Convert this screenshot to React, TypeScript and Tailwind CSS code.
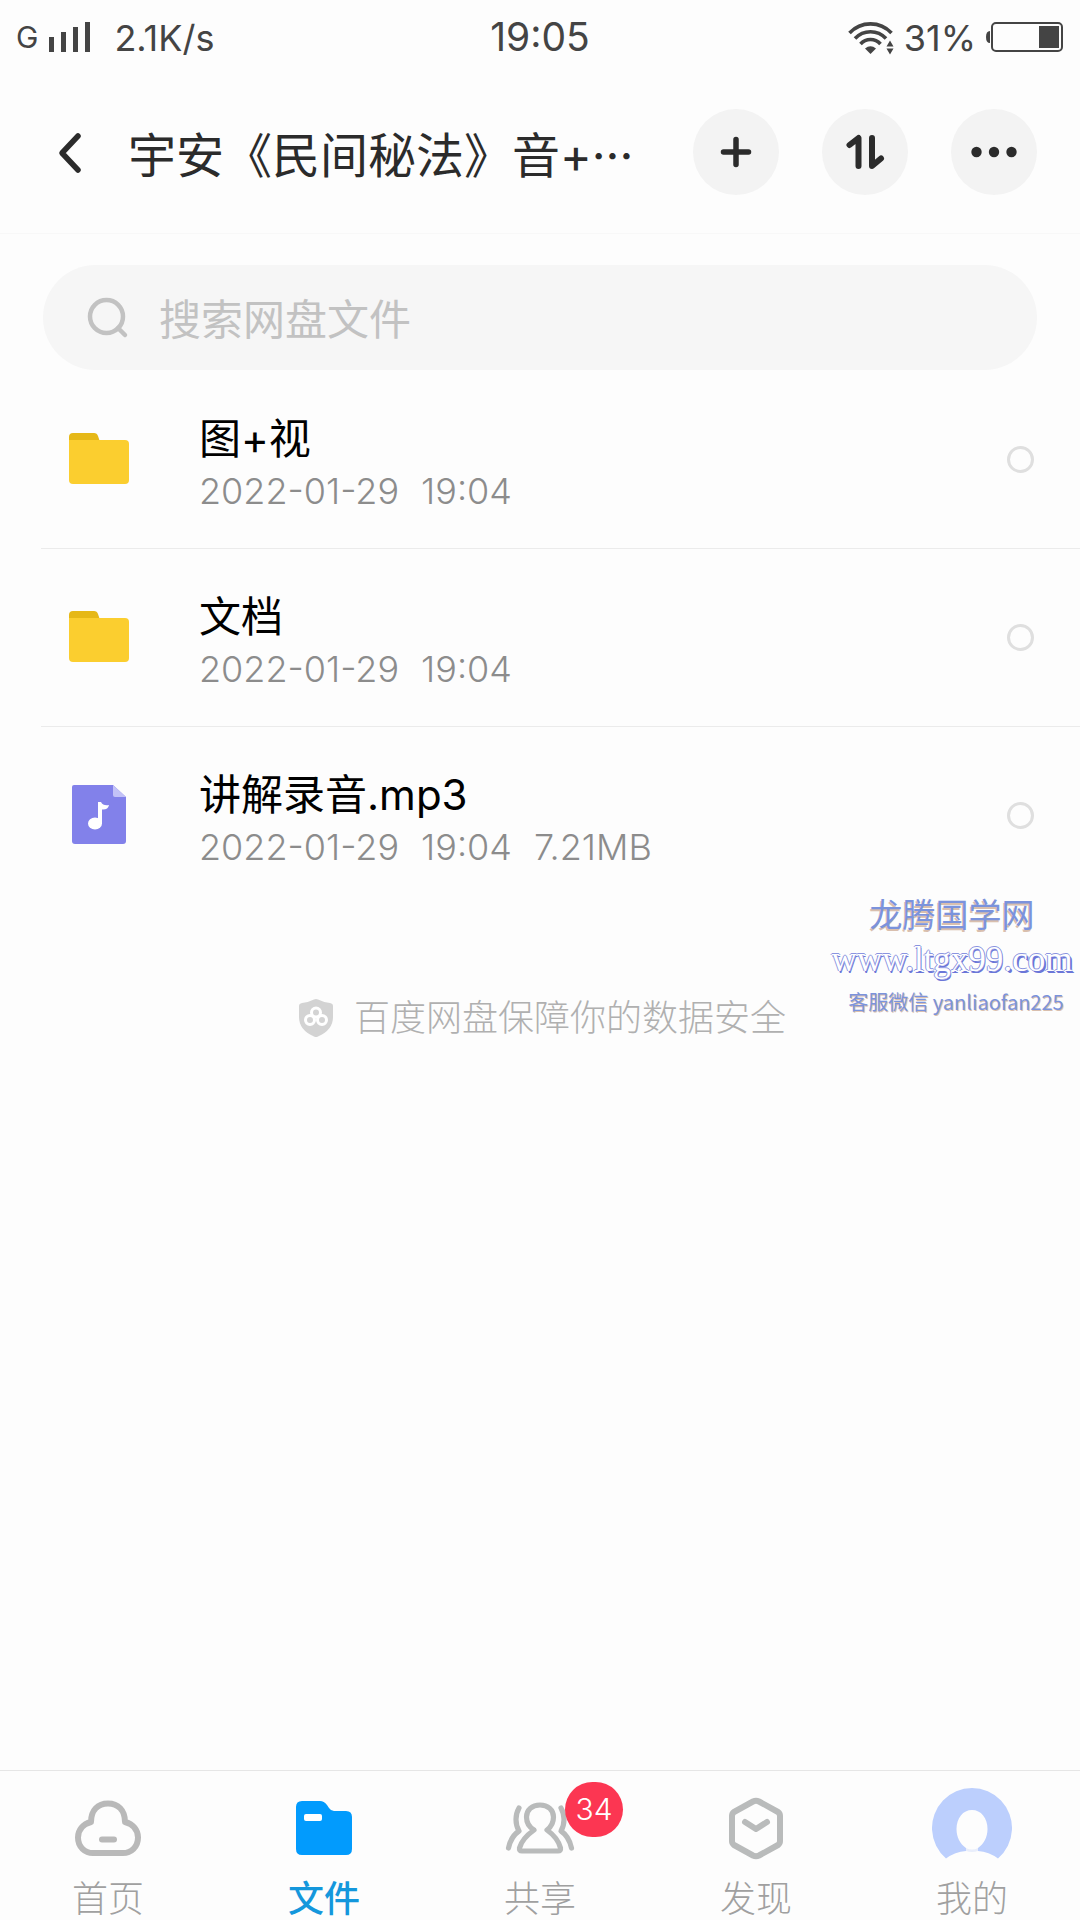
import React, { useState } from "react";

interface FileItem {
  id: number;
  name: string;
  type: "folder" | "audio";
  date: string;
  time: string;
  size?: string;
}

const files: FileItem[] = [
  { id: 1, name: "图+视", type: "folder", date: "2022-01-29", time: "19:04" },
  { id: 2, name: "文档", type: "folder", date: "2022-01-29", time: "19:04" },
  {
    id: 3,
    name: "讲解录音.mp3",
    type: "audio",
    date: "2022-01-29",
    time: "19:04",
    size: "7.21MB",
  },
];

function WifiIcon() {
  return (
    <svg width="46" height="34" viewBox="0 0 46 34" fill="none" stroke="#444" strokeWidth="3.6">
      <path d="M1.500 12C13-.2 32-.2 43.500 12" />
      <path d="M7 17.500C15.500 8.500 29.500 8.500 38 17.500" />
      <path d="M12.500 23C18 17 27 17 32.500 23" />
      <path d="M17 27.500Q22.500 23 28 27.500L22.500 33Z" fill="#444" stroke="none" />
      <path d="M38.500 25.500L42 19.500L45.500 25.500ZM38.500 27.500H45.500L42 33.500Z" fill="#444" stroke="none" />
    </svg>
  );
}

function StatusBar() {
  return (
    <div className="grid h-[75px] grid-cols-3 items-center px-4 text-[#444]">
      <div className="flex items-center">
        <span className="text-[30px]">G</span>
        <svg className="ml-[10px]" width="44" height="34" viewBox="0 0 44 34" fill="#444">
          <path d="M1 16h5v15H1zM13 11h5v20h-5zM25 6h5v25h-5zM37 1h5v30h-5z" />
        </svg>
        <span className="ml-[22px] text-[36px]">2.1K/s</span>
      </div>
      <div className="text-center text-[39px]">19:05</div>
      <div className="flex items-center justify-end">
        <WifiIcon />
        <span className="ml-[10px] text-[36px]">31%</span>
        <svg className="ml-2" width="80" height="34" viewBox="0 0 80 34" fill="none">
          <path d="M6 10Q2 10 2 16t4 6z" fill="#444" />
          <rect x="8" y="2" width="70" height="28" rx="4" stroke="#444" strokeWidth="2" />
          <rect x="55" y="5" width="20" height="22" fill="#444" />
        </svg>
      </div>
    </div>
  );
}

function Header() {
  return (
    <header className="flex h-[159px] items-center border-b border-[#f8f8f8] pr-[43px] pb-1 pl-12">
      <button type="button" aria-label="返回" className="mr-9">
        <svg width="44" height="44" viewBox="0 0 44 44" fill="none" stroke="#2b2b2b" strokeWidth="5.500" strokeLinecap="round" strokeLinejoin="round">
          <path d="M30 6L14 23L30 40" />
        </svg>
      </button>
      <h1 className="min-w-0 flex-1 pt-2 text-[48px] whitespace-nowrap text-[#2b2b2b]">
        宇安《民间秘法》音+···
      </h1>
      <div className="flex shrink-0 gap-[43px]">
        <button type="button" aria-label="添加" className="flex size-[86px] items-center justify-center rounded-full bg-[#f3f3f3]">
          <svg width="44" height="44" viewBox="0 0 44 44" stroke="#2b2b2b" strokeWidth="5.500" strokeLinecap="round">
            <path d="M22 9.500V34.500M9.500 22H34.500" />
          </svg>
        </button>
        <button type="button" aria-label="排序" className="flex size-[86px] items-center justify-center rounded-full bg-[#f3f3f3]">
          <svg width="44" height="44" viewBox="0 0 44 44" fill="none" stroke="#2b2b2b" strokeWidth="6" strokeLinecap="round" strokeLinejoin="round">
            <path d="M6.500 15L15.500 8V36" />
            <path d="M29 8V36L38 28.500" />
          </svg>
        </button>
        <button type="button" aria-label="更多" className="flex size-[86px] items-center justify-center rounded-full bg-[#f3f3f3]">
          <svg width="48" height="44" viewBox="0 0 48 44" fill="#2b2b2b">
            <circle cx="6.500" cy="22" r="5.200" />
            <circle cx="24" cy="22" r="5.200" />
            <circle cx="41.500" cy="22" r="5.200" />
          </svg>
        </button>
      </div>
    </header>
  );
}

function FolderIcon() {
  return (
    <svg width="62" height="62" viewBox="0 0 62 62">
      <path d="M1 13V8Q1 4 5 4H26Q29 4 30 7L32 13Z" fill="#e6b817" />
      <path d="M1 11H57Q61 11 61 15V51Q61 55 57 55H5Q1 55 1 51Z" fill="#fbce2f" />
    </svg>
  );
}

function AudioIcon() {
  return (
    <svg width="62" height="62" viewBox="0 0 62 62">
      <path d="M4 2Q4 0 6 0H45L58 12V56Q58 59 55 59H7Q4 59 4 56Z" fill="#8281ea" />
      <path d="M45 0L58 12H47Q45 12 45 10Z" fill="#c3c2f7" />
      <ellipse cx="27" cy="38.500" rx="7" ry="6" fill="#fff" />
      <path d="M30 17H33Q35 21 41 20Q40 25 34 24.500V39H30Z" fill="#fff" />
    </svg>
  );
}

function FileRow({ file }: { file: FileItem }) {
  return (
    <li className="ml-[41px] border-b border-[#ebebeb] last:border-b-0">
      <label className="flex h-[177px] items-center pr-[46px] pl-[27px]">
        {file.type === "folder" ? <FolderIcon /> : <AudioIcon />}
        <span className="ml-[69px] flex flex-1 flex-col pt-2">
          <span className="text-[42px] leading-[54px] text-black">{file.name}</span>
          <span className="flex gap-[22px] text-[36px] leading-[50px] font-light text-[#8c8c8c]">
            <span>{file.date}</span>
            <span>{file.time}</span>
            {file.size && <span>{file.size}</span>}
          </span>
        </span>
        <input
          type="checkbox"
          className="size-[27px] appearance-none rounded-full border-[3px] border-[#dfdfdf] checked:bg-[#0a9bff]"
        />
      </label>
    </li>
  );
}

function ShieldIcon() {
  return (
    <svg width="36" height="40" viewBox="0 0 36 40">
      <path d="M16 1.500Q18 .5 20 1.500Q26 4.500 32 5Q35 5.500 35 8V19Q35 32 20 38.500Q18 39.500 16 38.500Q1 32 1 19V8Q1 5.500 4 5Q10 4.500 16 1.500Z" fill="#d3d3d3" />
      <g fill="none" stroke="#fff" strokeWidth="3">
        <circle cx="18" cy="14.500" r="4.500" />
        <circle cx="12" cy="22" r="4.500" />
        <circle cx="24" cy="22" r="4.500" />
      </g>
    </svg>
  );
}

function Watermark() {
  return (
    <div className="pointer-events-none absolute top-[892px] right-2 flex w-[240px] flex-col items-center text-[#7b93dc]">
      <div className="text-[33px] leading-[46px] [text-shadow:-1px_2px_0_#d9bfae]">
        龙腾国学网
      </div>
      <div className="font-['Liberation_Serif',serif] text-[35px] leading-[44px] text-white [text-shadow:-1px_0_0_#8a94e0,1px_0_0_#8a94e0,0_-1px_0_#8a94e0,1px_2px_0_#6b76d8]">
        www.ltgx99
        <span className="[text-shadow:-1px_0_0_#8a94e0,0_-1px_0_#8a94e0,1px_1px_0_#6b76d8,2px_2px_0_#6b76d8]">
          .com
        </span>
      </div>
      <div className="pl-2 font-['Noto_Sans_CJK_SC',sans-serif] text-[20px] leading-[40px] whitespace-nowrap [text-shadow:1px_1px_0_#d9bfae]">
        客服微信 yanliaofan225
      </div>
    </div>
  );
}

function CloudIcon() {
  return (
    <svg width="68" height="58" viewBox="0 0 68 58" fill="none" stroke="#b9b9b9" strokeWidth="6" strokeLinejoin="round">
      <path d="M17 23C17 11 24 4.500 34 4.500S51 11 51 23C59 25 64 31 64 38.500C64 48 57 54 49 54H19C11 54 4 48 4 38.500C4 31 9 25 17 23Z" />
      <path d="M28 40.500H40" strokeLinecap="round" />
    </svg>
  );
}

function FilesIcon() {
  return (
    <svg width="58" height="58" viewBox="0 0 58 58">
      <path d="M1 8Q1 2 7 2H25Q29 2 32 6L34 9Q36 12 39 12H51Q57 12 57 18V50Q57 56 51 56H7Q1 56 1 50Z" fill="#029bfd" />
      <rect x="9" y="15" width="18" height="7" rx="2" fill="#fff" />
    </svg>
  );
}

function ShareIcon() {
  return (
    <svg width="70" height="58" viewBox="0 0 70 58" fill="none" stroke="#b9bbbb" strokeWidth="5.200" strokeLinecap="round" strokeLinejoin="round">
      <path d="M29 31C24 28 21.500 23 21.500 18C21.500 11 27 6 35 6S48.500 11 48.500 18C48.500 23 46 28 42 31C49 36 54 43 55.500 49Q56 52 53 52H17Q14 52 14.500 49C16 43 22 36 29 31Z" />
      <path d="M14 9C10 16 10 25 14 32C8 36 5 42 3.500 49" />
      <path d="M56 9C60 16 60 25 56 32C62 36 65 42 66.500 49" />
    </svg>
  );
}

function DiscoverIcon() {
  return (
    <svg width="58" height="68" viewBox="0 0 58 68" fill="none" stroke="#b9bbbb" strokeWidth="6" strokeLinecap="round" strokeLinejoin="round">
      <path d="M26 7.500Q29 6 32 7.500L51 18Q53 19.500 53 22V47Q53 49.500 51 51L32 61.500Q29 63 26 61.500L7 51Q5 49.500 5 47V22Q5 19.500 7 18Z" />
      <path d="M18 28L29 35L40 28" />
    </svg>
  );
}

function AvatarIcon() {
  return (
    <svg width="80" height="80" viewBox="0 0 80 80">
      <path d="M14 70.400A40 40 0 1 1 66 70.400Q57 64 46 63V60C52 56 55.500 49 55.500 41C55.500 30 49 22 40 22S24.500 30 24.500 41C24.500 49 28 56 34 60V63Q23 64 14 70.400Z" fill="#bccffd" />
      <path d="M34 60Q40 63 46 60V63Q40 65 34 63Z" fill="#e9eefb" />
    </svg>
  );
}

const tabs = [
  { label: "首页", icon: <CloudIcon /> },
  { label: "文件", icon: <FilesIcon /> },
  { label: "共享", icon: <ShareIcon />, badge: 34 },
  { label: "发现", icon: <DiscoverIcon /> },
  { label: "我的", icon: <AvatarIcon /> },
];

function TabBar() {
  const [active, setActive] = useState("文件");

  return (
    <nav className="grid grid-cols-5 border-t border-[#e6e6e6]">
      {tabs.map((tab) => (
        <button
          key={tab.label}
          type="button"
          onClick={() => setActive(tab.label)}
          className="flex flex-col items-center"
        >
          <span className="relative flex h-[107px] items-center pt-[6px]">
            {tab.icon}
            {tab.badge && (
              <span className="absolute top-[11px] left-[60px] flex h-[55px] w-[58px] items-center justify-center rounded-full bg-[#fc3652] text-[30px] font-light text-white">
                {tab.badge}
              </span>
            )}
          </span>
          <span
            className={
              active === tab.label
                ? "text-[36px] leading-[42px] font-medium text-[#1497dc]"
                : "text-[36px] leading-[42px] font-light text-[#a0a0a0]"
            }
          >
            {tab.label}
          </span>
        </button>
      ))}
    </nav>
  );
}

export default function App() {
  return (
    <div className="relative flex min-h-screen flex-col bg-[#fdfdfd] font-['Inter','Noto_Sans_CJK_SC',sans-serif]">
      <StatusBar />
      <Header />

      <main className="flex-1">
        {/* Search */}
        <label className="mx-[43px] mt-[31px] flex h-[105px] items-center rounded-full bg-[#f6f6f6] pl-[44px]">
          <svg width="42" height="42" viewBox="0 0 42 42" fill="none" stroke="#c2c2c2" strokeWidth="4.500" strokeLinecap="round">
            <circle cx="19.500" cy="19.500" r="16.500" />
            <path d="M31 31L38 38" />
          </svg>
          <input
            type="text"
            aria-label="搜索网盘文件"
            placeholder="搜索网盘文件"
            className="ml-[30px] min-w-0 flex-1 bg-transparent pt-1 text-[42px] outline-none placeholder:text-[#c2c2c2]"
          />
        </label>

        <ul className="mt-px">
          {files.map((file) => (
            <FileRow key={file.id} file={file} />
          ))}
        </ul>

        <div className="mt-[91px] flex items-center justify-center gap-5 pl-1 text-[36px] leading-[46px] font-light text-[#b0b0b0]">
          <ShieldIcon />
          <p>百度网盘保障你的数据安全</p>
        </div>
      </main>

      <Watermark />
      <TabBar />
    </div>
  );
}
